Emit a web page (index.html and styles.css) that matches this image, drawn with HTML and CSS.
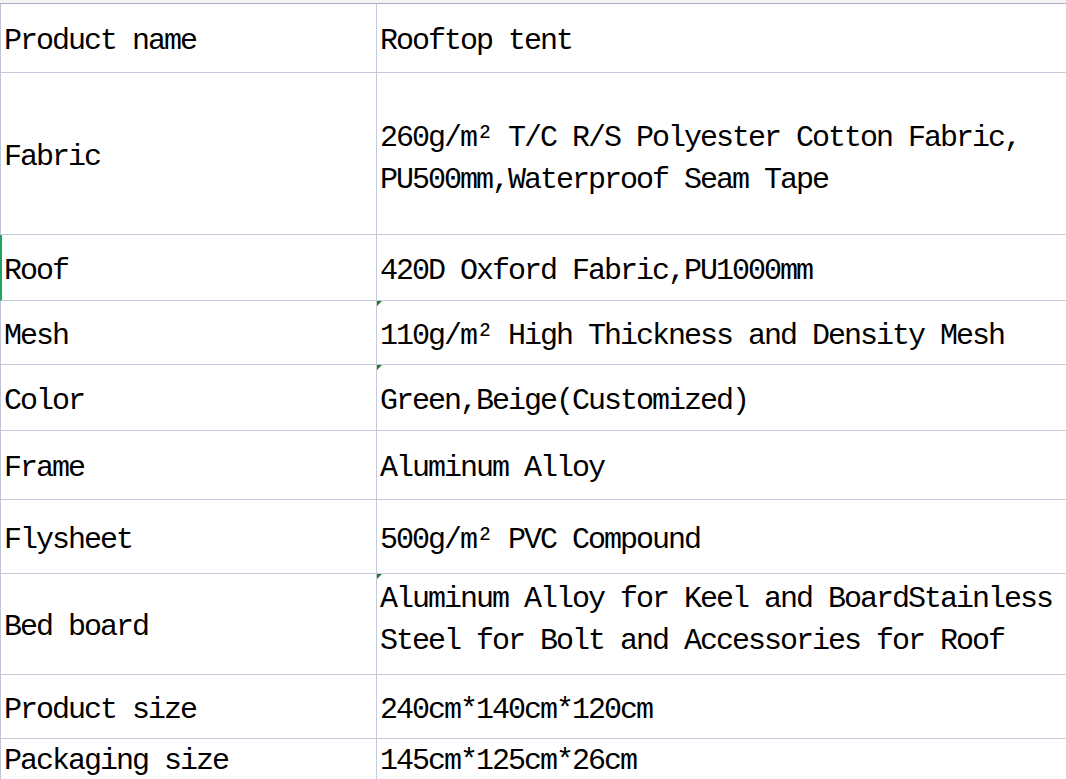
FILE: index.html
```html
<!DOCTYPE html>
<html>
<head>
<meta charset="utf-8">
<link rel="stylesheet" href="styles.css">
</head>
<body>
<div class="topstrip"></div>
<div class="sheet">
  <div class="cell key r1">Product name</div>
  <div class="cell val r1">Rooftop tent</div>

  <div class="cell key r2">Fabric</div>
  <div class="cell val r2 lower">260g/m² T/C R/S Polyester Cotton Fabric,<br>PU500mm,Waterproof Seam Tape</div>

  <div class="cell key r3 selected">Roof</div>
  <div class="cell val r3">420D Oxford Fabric,PU1000mm</div>

  <div class="cell key r4">Mesh</div>
  <div class="cell val r4 flag">110g/m² High Thickness and Density Mesh</div>

  <div class="cell key r5">Color</div>
  <div class="cell val r5 flag">Green,Beige(Customized)</div>

  <div class="cell key r6">Frame</div>
  <div class="cell val r6">Aluminum Alloy</div>

  <div class="cell key r7">Flysheet</div>
  <div class="cell val r7">500g/m² PVC Compound</div>

  <div class="cell key r8">Bed board</div>
  <div class="cell val r8 flag higher">Aluminum Alloy for Keel and BoardStainless<br>Steel for Bolt and Accessories for Roof</div>

  <div class="cell key r9">Product size</div>
  <div class="cell val r9">240cm*140cm*120cm</div>

  <div class="cell key r10">Packaging size</div>
  <div class="cell val r10">145cm*125cm*26cm</div>
</div>
</body>
</html>
```

FILE: styles.css
```css
html, body {
  margin: 0;
  padding: 0;
  background: #ffffff;
  overflow: hidden;
}

.topstrip {
  height: 3px;
  background: #f2f2f2;
}

.sheet {
  display: grid;
  grid-template-columns: 377px 760px;
  border-top: 1px solid #aab0c6;
  font-family: "Liberation Mono", monospace;
  font-size: 30px;
  letter-spacing: -2px;
  line-height: 42px;
  color: #000;
}

.cell {
  position: relative;
  display: flex;
  align-items: center;
  box-sizing: border-box;
  border-bottom: 1px solid #c6cbdc;
  padding-top: 6px;
  white-space: nowrap;
}

.key {
  border-left: 1px solid #c0c5d6;
  border-right: 1px solid #c6cbdc;
  padding-left: 3px;
}

.val {
  padding-left: 3px;
}

.lower {
  padding-top: 11px;
}

.higher {
  padding-top: 0;
  padding-bottom: 8px;
}

.selected {
  border-left: 2px solid #21a366;
  padding-left: 2px;
}

.flag::before {
  content: "";
  position: absolute;
  left: 0;
  top: 0;
  width: 0;
  height: 0;
  border-top: 5px solid #1e7b34;
  border-right: 5px solid transparent;
}

.r1 { height: 69px; }
.r2 { height: 162px; }
.r3 { height: 66px; }
.r4 { height: 64px; }
.r5 { height: 66px; }
.r6 { height: 69px; }
.r7 { height: 74px; }
.r8 { height: 101px; }
.r9 { height: 64px; }
.r10 { height: 41px; border-bottom: 0; padding-top: 2px; }
```
